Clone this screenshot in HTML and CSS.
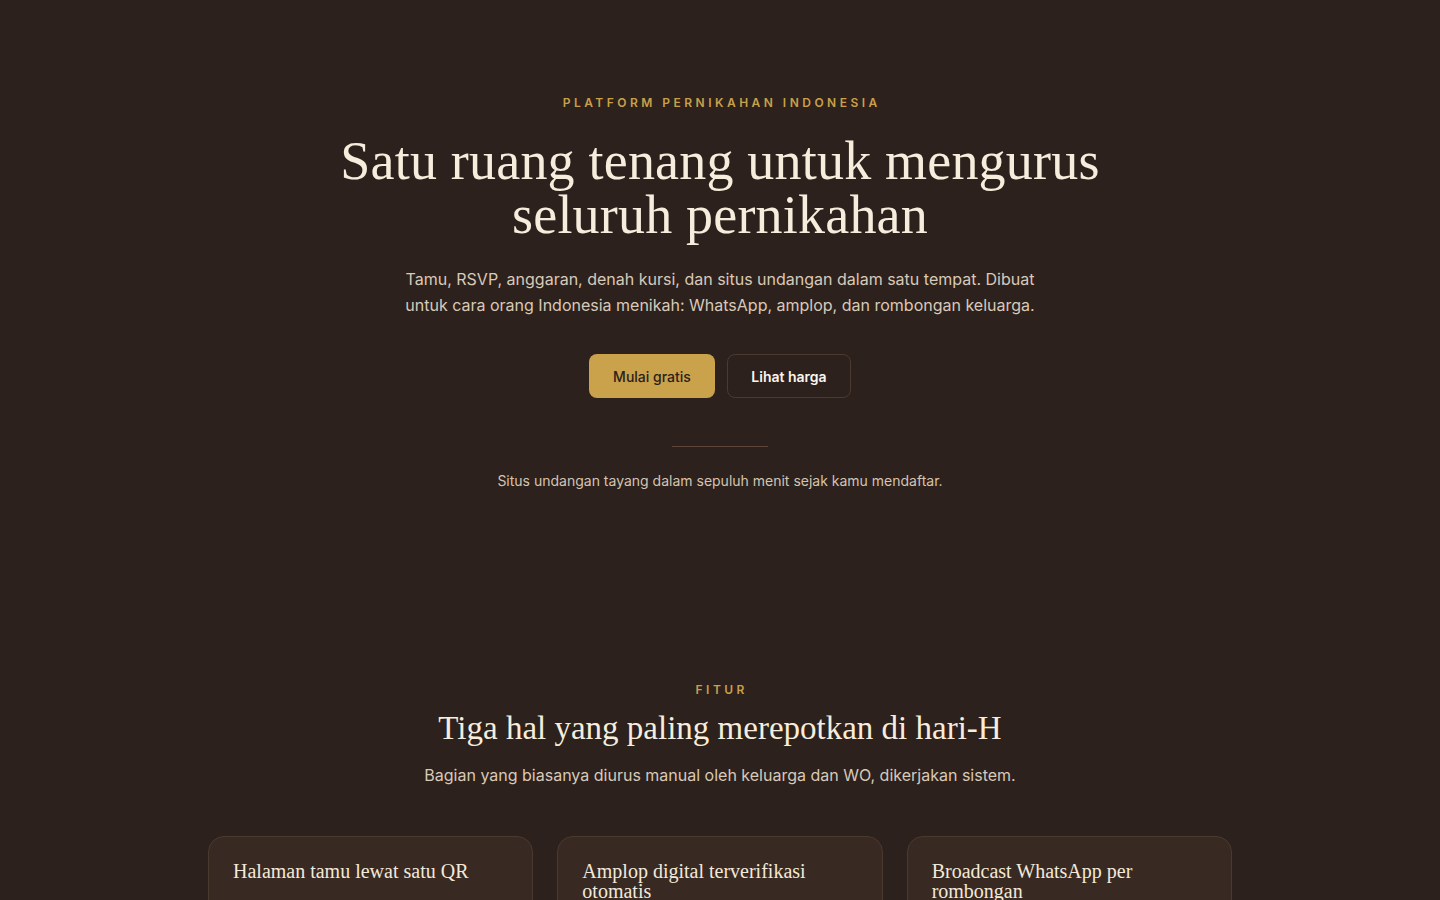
FILE: index.html
```html
<!DOCTYPE html>
<html lang="id">
<head>
<meta charset="utf-8">
<title>Platform Pernikahan Indonesia</title>
<link rel="stylesheet" href="styles.css">
</head>
<body>
<main class="page">
  <section class="hero">
    <p class="eyebrow">Platform Pernikahan Indonesia</p>
    <h1 class="hero-title">Satu ruang tenang untuk mengurus<br>seluruh pernikahan</h1>
    <p class="hero-lead">Tamu, RSVP, anggaran, denah kursi, dan situs undangan dalam satu tempat. Dibuat untuk cara orang Indonesia menikah: WhatsApp, amplop, dan rombongan keluarga.</p>
    <div class="actions">
      <a class="btn btn-primary" href="#">Mulai gratis</a>
      <a class="btn btn-ghost" href="#">Lihat harga</a>
    </div>
    <div class="divider"></div>
    <p class="hero-note">Situs undangan tayang dalam sepuluh menit sejak kamu mendaftar.</p>
  </section>
  <section class="features">
    <p class="eyebrow">Fitur</p>
    <h2 class="section-title">Tiga hal yang paling merepotkan di hari-H</h2>
    <p class="section-lead">Bagian yang biasanya diurus manual oleh keluarga dan WO, dikerjakan sistem.</p>
    <div class="cards">
      <article class="card"><h3 class="card-title">Halaman tamu lewat satu QR</h3></article>
      <article class="card"><h3 class="card-title">Amplop digital terverifikasi otomatis</h3></article>
      <article class="card"><h3 class="card-title">Broadcast WhatsApp per rombongan</h3></article>
    </div>
  </section>
</main>
</body>
</html>
```
FILE: styles.css
```css
* { box-sizing: border-box; }
html, body { margin: 0; padding: 0; }
body {
  background: #2c211c;
  color: #f3e9da;
  font-family: Inter, "Noto Sans", sans-serif;
  min-height: 100vh;
}
.page { display: flex; flex-direction: column; align-items: center; }
.hero {
  display: flex; flex-direction: column; align-items: center;
  padding: 96px 24px 96px;
  text-align: center;
}
.eyebrow {
  margin: 0;
  font-size: 12px; line-height: 14px;
  font-weight: 600;
  letter-spacing: 0.29em;
  text-transform: uppercase;
  color: #c9a04a;
  padding-left: 0.29em;
}
.hero-title {
  margin: 24px 0 0;
  font-family: "Liberation Serif", "DejaVu Serif", serif;
  font-weight: 400;
  font-size: 54px;
  line-height: 54px;
  color: #f6eddd;
  letter-spacing: 0.2px;
}
.hero-lead {
  margin: 24px 0 0;
  max-width: 650px;
  font-size: 16px; line-height: 26px;
  color: #d9c9b8;
}
.actions { display: flex; gap: 12px; margin-top: 36px; }
.btn {
  display: inline-flex; align-items: center; justify-content: center;
  height: 44px; padding: 0;
  border-radius: 8px;
  font-size: 14px; text-decoration: none;
  white-space: nowrap;
}
.btn-primary { background: #c9a24b; color: #2c211c; font-weight: 500; width: 126px; }
.btn-ghost { border: 1px solid #4b3a30; color: #fbf5ec; font-weight: 600; width: 124px; }
.divider { width: 96px; height: 1px; background: #5a4536; margin-top: 48px; }
.hero-note {
  margin: 24px 0 0;
  font-size: 14px; line-height: 20px;
  color: #d4c4b2;
}
.features {
  width: 1024px;
  display: flex; flex-direction: column; align-items: center;
  padding-top: 96px;
  text-align: center;
}
.section-title {
  margin: 11px 0 0;
  font-family: "Liberation Serif", "DejaVu Serif", serif;
  font-weight: 400;
  font-size: 33px; line-height: 40px;
  color: #f6eddd;
}
.section-lead {
  margin: 15px 0 0;
  font-size: 16px; line-height: 24px;
  color: #d9c9b8;
}
.cards {
  margin-top: 49px;
  width: 100%;
  display: grid; grid-template-columns: repeat(3, 1fr); gap: 24px;
  text-align: left;
}
.card {
  background: #382a22;
  border: 1px solid #4a392e;
  border-radius: 16px;
  padding: 24px 24px 24px;
  min-height: 200px;
}
.card-title {
  margin: 0;
  font-family: "Liberation Serif", "DejaVu Serif", serif;
  font-weight: 400;
  font-size: 20px; line-height: 20px;
  color: #f3e9da;
}
```
